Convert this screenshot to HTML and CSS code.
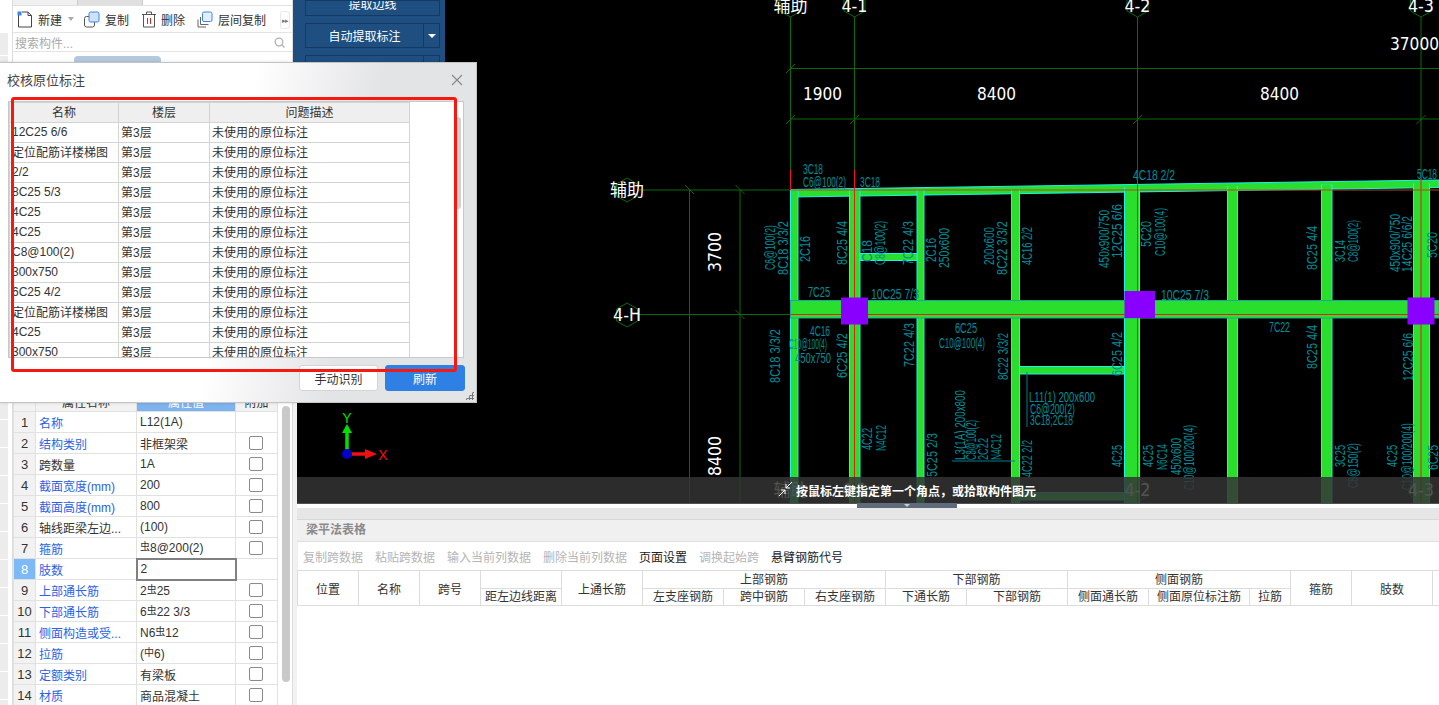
FILE: index.html
```html
<!DOCTYPE html>
<html lang="zh-CN">
<head>
<meta charset="utf-8">
<title>校核原位标注</title>
<link rel="stylesheet" href="styles.css">
</head>
<body>
<div class="app">
  <aside class="side">
    <div class="nav"></div>
    <div class="panel">
      <div class="tabs"><span class="tab"></span><span class="tab tab-on"></span></div>
      <div class="tools">
        <span class="tool tool-new">
          <svg class="ico" width="16" height="17" viewBox="0 0 16 17"><path d="M1.5 3.5v12.5h13V4.500l-3.500-3.500H5" fill="none" stroke="#444" stroke-width="1"/><path d="M11 1v3.500h3.500" fill="none" stroke="#444"/><rect x="0.500" y="0.500" width="4" height="4" fill="#3a86e8"/></svg>
          新建<span class="caret"></span>
        </span>
        <span class="tool">
          <svg class="ico" width="16" height="17" viewBox="0 0 16 17"><rect x="0.500" y="5.500" width="10" height="10.500" rx="2" fill="none" stroke="#555"/><rect x="5" y="1" width="10" height="10" rx="1.500" fill="#cfe0f8" stroke="#3a86e8"/></svg>
          复制
        </span>
        <span class="tool tool-del">
          <svg class="ico" width="14" height="17" viewBox="0 0 14 17"><path d="M1.500 4v12h11V4M0 3.500h14M4.500 3V1h5v2" fill="none" stroke="#555"/><path d="M5.500 7v6M8.500 7v6" stroke="#d62a20"/></svg>
          删除
        </span>
        <span class="tool">
          <svg class="ico" width="16" height="17" viewBox="0 0 16 17"><path d="M3.500 6v7.500h8M1 8.500V16h8" fill="none" stroke="#666"/><rect x="5.500" y="1" width="9.500" height="9.500" rx="1.500" fill="#e6effb" stroke="#3a86e8"/></svg>
          层间复制
        </span>
        <span class="more">▸▸</span>
      </div>
      <div class="search"><span>搜索构件...</span>
        <svg width="11" height="11" viewBox="0 0 11 11"><circle cx="5" cy="5" r="3.800" fill="none" stroke="#b0b0b0" stroke-width="1.300"/><path d="M8 8l2.500 2.500" stroke="#b0b0b0" stroke-width="1.300"/></svg>
      </div>
      <div class="subtab"></div>
      <div class="props-wrap">
        <table class="props">
          <colgroup><col class="c-i"><col class="c-n"><col class="c-v"><col class="c-a"></colgroup>
          <tr class="p-head"><th></th><th>属性名称</th><th class="p-sel">属性值</th><th>附加</th></tr>
          <tr><td class="i">1</td><td class="link">名称</td><td>L12(1A)</td><td></td></tr>
          <tr><td class="i">2</td><td class="link">结构类别</td><td>非框架梁</td><td class="k"><span class="box"></span></td></tr>
          <tr><td class="i">3</td><td>跨数量</td><td>1A</td><td class="k"><span class="box"></span></td></tr>
          <tr><td class="i">4</td><td class="link">截面宽度(mm)</td><td>200</td><td class="k"><span class="box"></span></td></tr>
          <tr><td class="i">5</td><td class="link">截面高度(mm)</td><td>800</td><td class="k"><span class="box"></span></td></tr>
          <tr><td class="i">6</td><td>轴线距梁左边...</td><td>(100)</td><td class="k"><span class="box"></span></td></tr>
          <tr><td class="i">7</td><td class="link">箍筋</td><td><span class="bar">虫</span>8@200(2)</td><td class="k"><span class="box"></span></td></tr>
          <tr><td class="i i-on">8</td><td class="link">肢数</td><td class="edit">2</td><td></td></tr>
          <tr><td class="i">9</td><td class="link">上部通长筋</td><td>2<span class="bar">虫</span>25</td><td class="k"><span class="box"></span></td></tr>
          <tr><td class="i">10</td><td class="link">下部通长筋</td><td>6<span class="bar">虫</span>22 3/3</td><td class="k"><span class="box"></span></td></tr>
          <tr><td class="i">11</td><td class="link">侧面构造或受...</td><td>N6<span class="bar">虫</span>12</td><td class="k"><span class="box"></span></td></tr>
          <tr><td class="i">12</td><td class="link">拉筋</td><td>(<span class="bar">中</span>6)</td><td class="k"><span class="box"></span></td></tr>
          <tr><td class="i">13</td><td class="link">定额类别</td><td>有梁板</td><td class="k"><span class="box"></span></td></tr>
          <tr><td class="i">14</td><td class="link">材质</td><td>商品混凝土</td><td class="k"><span class="box"></span></td></tr>
        </table>
        <div class="p-scroll"></div>
      </div>
    </div>
  </aside>

  <main class="main">
    <section class="canvas">
      <svg class="cad" width="1142" height="503" viewBox="297 0 1142 503">
        <g class="axis">
          <path d="M790.500 17V190M854.500 17V190M1137.500 17V190M1421 17V190"/>
          <path d="M790.500 68.500H1439M790.500 119H1439"/>
          <path d="M639 190H790M639 314.500H790"/>
          <path d="M689.500 190V503M740 190V503"/>
          <path d="M786 73l9-9M786 124l9-9M850 124l9-9M1133 124l9-9M1416.500 124l9-9M685 185l9 9M735.500 185l9 9M735.500 310l9 9"/>
          <polygon points="790.500,-7 801,-1 801,11 790.500,17 780,11 780,-1"/>
          <polygon points="854.500,-7 865,-1 865,11 854.500,17 844,11 844,-1"/>
          <polygon points="1137.500,-7 1148,-1 1148,11 1137.500,17 1127,11 1127,-1"/>
          <polygon points="1421,-7 1431.500,-1 1431.500,11 1421,17 1410.500,11 1410.500,-1"/>
          <polygon points="627,178 637.500,184 637.500,196 627,202 616.500,196 616.500,184"/>
          <polygon points="627,303 637.500,309 637.500,321 627,327 616.500,321 616.500,309"/>
          <polygon points="790.500,478 801,484 801,496 790.500,502 780,496 780,484"/>
          <polygon points="854.500,478 865,484 865,496 854.500,502 844,496 844,484"/>
          <polygon points="1137.500,478 1148,484 1148,496 1137.500,502 1127,496 1127,484"/>
          <polygon points="1421,478 1431.500,484 1431.500,496 1421,502 1410.500,496 1410.500,484"/>
        </g>
        <g class="beams">
          <polygon points="790.500,189.500 1439,180 1439,187.500 790.500,197"/>
          <rect x="790.500" y="190" width="7.500" height="313"/>
          <rect x="849.500" y="190" width="10.500" height="313"/>
          <rect x="917" y="190" width="7" height="313"/>
          <rect x="1011.500" y="190" width="8" height="313"/>
          <rect x="1124.500" y="188" width="15" height="315"/>
          <rect x="1227.500" y="187" width="10" height="316"/>
          <rect x="1321.500" y="185" width="10.500" height="318"/>
          <rect x="1413.500" y="184" width="16" height="319"/>
          <rect x="860" y="253.500" width="57" height="7"/>
          <rect x="1019.500" y="366.500" width="105" height="7.500"/>
          <rect x="1019.500" y="492.500" width="105" height="7.500"/>
          <rect class="main-beam" x="790.500" y="300.500" width="648.500" height="17.500"/>
        </g>
        <g class="fill">
          <rect x="791.500" y="301.500" width="6" height="16"/>
          <rect x="850.500" y="301.500" width="8.500" height="16"/>
          <rect x="918" y="301.500" width="5" height="16"/>
          <rect x="1012.500" y="301.500" width="6" height="16"/>
          <rect x="1125.500" y="301.500" width="13" height="16"/>
          <rect x="1228.500" y="301.500" width="8" height="16"/>
          <rect x="1322.500" y="301.500" width="8.500" height="16"/>
          <rect x="1414.500" y="301.500" width="14" height="16"/>
          <rect x="791.500" y="190.500" width="6" height="6"/>
          <rect x="850.500" y="190.500" width="8.500" height="6"/>
          <rect x="918" y="189.500" width="5" height="6"/>
          <rect x="1012.500" y="188.500" width="6" height="6"/>
          <rect x="1125.500" y="187" width="13" height="6"/>
          <rect x="1228.500" y="186" width="8" height="6"/>
          <rect x="1322.500" y="184.500" width="8.500" height="6"/>
          <rect x="1414.500" y="183" width="14" height="6"/>
        </g>
        <g class="reds">
          <path d="M790.500 170V190M854.500 170V503M1137.500 180V503M1421 178V503"/>
          <path d="M790.500 314.500H1439"/>
        </g>
        <path class="redline" d="M790.500 190H1439"/>
        <g class="cols">
          <rect x="841" y="297.500" width="27" height="27"/>
          <rect x="1124.500" y="291" width="30.500" height="27"/>
          <rect x="1407.500" y="297.500" width="27" height="27"/>
        </g>
        <path class="lead" d="M1027 372V427M952 461H1015"/>
        <g class="note">
          <text x="803" y="174" textLength="20" lengthAdjust="spacingAndGlyphs">3C18</text>
          <text x="803" y="187" textLength="43" lengthAdjust="spacingAndGlyphs">C6@100(2)</text>
          <text x="860" y="187" textLength="20" lengthAdjust="spacingAndGlyphs">3C18</text>
          <text x="1133" y="180" textLength="42" lengthAdjust="spacingAndGlyphs">4C18 2/2</text>
          <text x="1417" y="179" textLength="20" lengthAdjust="spacingAndGlyphs">5C18</text>
          <text x="808" y="297" textLength="22" lengthAdjust="spacingAndGlyphs">7C25</text>
          <text x="871" y="299" textLength="48" lengthAdjust="spacingAndGlyphs">10C25 7/3</text>
          <text x="810" y="336" textLength="20" lengthAdjust="spacingAndGlyphs">4C16</text>
          <text x="789" y="349" textLength="38" lengthAdjust="spacingAndGlyphs">C10@100(4)</text>
          <text x="795" y="363" textLength="36" lengthAdjust="spacingAndGlyphs">450x750</text>
          <text x="955" y="333" textLength="22" lengthAdjust="spacingAndGlyphs">6C25</text>
          <text x="939" y="348" textLength="46" lengthAdjust="spacingAndGlyphs">C10@100(4)</text>
          <text x="1161" y="300" textLength="48" lengthAdjust="spacingAndGlyphs">10C25 7/3</text>
          <text x="1269" y="332" textLength="21" lengthAdjust="spacingAndGlyphs">7C22</text>
          <text x="1029" y="402" textLength="66" lengthAdjust="spacingAndGlyphs">L11(1) 200x600</text>
          <text x="1030" y="414" textLength="45" lengthAdjust="spacingAndGlyphs">C6@200(2)</text>
          <text x="1030" y="425" textLength="43" lengthAdjust="spacingAndGlyphs">3C18;2C18</text>

          <text transform="translate(775,270) rotate(-90)" textLength="45" lengthAdjust="spacingAndGlyphs">C6@100(2)</text>
          <text transform="translate(788,275) rotate(-90)" textLength="54" lengthAdjust="spacingAndGlyphs">8C18 3/3/2</text>
          <text transform="translate(810,262) rotate(-90)" textLength="26" lengthAdjust="spacingAndGlyphs">2C16</text>
          <text transform="translate(847,265) rotate(-90)" textLength="44" lengthAdjust="spacingAndGlyphs">8C25 4/4</text>
          <text transform="translate(872,262) rotate(-90)" textLength="22" lengthAdjust="spacingAndGlyphs">C18</text>
          <text transform="translate(885,265) rotate(-90)" textLength="44" lengthAdjust="spacingAndGlyphs">C8@100(2)</text>
          <text transform="translate(913,265) rotate(-90)" textLength="44" lengthAdjust="spacingAndGlyphs">7C22 4/3</text>
          <text transform="translate(936,262) rotate(-90)" textLength="24" lengthAdjust="spacingAndGlyphs">2C16</text>
          <text transform="translate(949,268) rotate(-90)" textLength="40" lengthAdjust="spacingAndGlyphs">250x600</text>
          <text transform="translate(994,265) rotate(-90)" textLength="38" lengthAdjust="spacingAndGlyphs">200x600</text>
          <text transform="translate(1007,275) rotate(-90)" textLength="54" lengthAdjust="spacingAndGlyphs">8C22 3/3/2</text>
          <text transform="translate(1032,265) rotate(-90)" textLength="38" lengthAdjust="spacingAndGlyphs">4C16 2/2</text>
          <text transform="translate(1109,268) rotate(-90)" textLength="58" lengthAdjust="spacingAndGlyphs">450x900/750</text>
          <text transform="translate(1122,258) rotate(-90)" textLength="54" lengthAdjust="spacingAndGlyphs">12C25 6/6</text>
          <text transform="translate(1151,247) rotate(-90)" textLength="26" lengthAdjust="spacingAndGlyphs">5C20</text>
          <text transform="translate(1165,256) rotate(-90)" textLength="48" lengthAdjust="spacingAndGlyphs">C10@100(4)</text>
          <text transform="translate(1317,270) rotate(-90)" textLength="44" lengthAdjust="spacingAndGlyphs">8C25 4/4</text>
          <text transform="translate(1345,262) rotate(-90)" textLength="22" lengthAdjust="spacingAndGlyphs">3C14</text>
          <text transform="translate(1358,262) rotate(-90)" textLength="42" lengthAdjust="spacingAndGlyphs">C8@100(2)</text>
          <text transform="translate(1400,272) rotate(-90)" textLength="58" lengthAdjust="spacingAndGlyphs">450x900/750</text>
          <text transform="translate(1412,272) rotate(-90)" textLength="56" lengthAdjust="spacingAndGlyphs">14C25 6/6/2</text>
          <text transform="translate(1437,258) rotate(-90)" textLength="26" lengthAdjust="spacingAndGlyphs">5C20</text>

          <text transform="translate(780,383) rotate(-90)" textLength="54" lengthAdjust="spacingAndGlyphs">8C18 3/3/2</text>
          <text transform="translate(847,378) rotate(-90)" textLength="45" lengthAdjust="spacingAndGlyphs">6C25 4/2</text>
          <text transform="translate(914,367) rotate(-90)" textLength="44" lengthAdjust="spacingAndGlyphs">7C22 4/3</text>
          <text transform="translate(1008,380) rotate(-90)" textLength="47" lengthAdjust="spacingAndGlyphs">8C22 3/3/2</text>
          <text transform="translate(872,450) rotate(-90)" textLength="22" lengthAdjust="spacingAndGlyphs">4C22</text>
          <text transform="translate(886,451) rotate(-90)" textLength="26" lengthAdjust="spacingAndGlyphs">N4C12</text>
          <text transform="translate(937,477) rotate(-90)" textLength="44" lengthAdjust="spacingAndGlyphs">5C25 2/3</text>
          <text transform="translate(965,460) rotate(-90)" textLength="70" lengthAdjust="spacingAndGlyphs">L3(1A) 200x800</text>
          <text transform="translate(976,460) rotate(-90)" textLength="40" lengthAdjust="spacingAndGlyphs">C8@100(2)</text>
          <text transform="translate(988,460) rotate(-90)" textLength="22" lengthAdjust="spacingAndGlyphs">2C22</text>
          <text transform="translate(1001,460) rotate(-90)" textLength="26" lengthAdjust="spacingAndGlyphs">N4C12</text>
          <text transform="translate(1122,376) rotate(-90)" textLength="44" lengthAdjust="spacingAndGlyphs">6C25 4/2</text>
          <text transform="translate(1032,477) rotate(-90)" textLength="37" lengthAdjust="spacingAndGlyphs">4C22 2/2</text>
          <text transform="translate(1122,467) rotate(-90)" textLength="22" lengthAdjust="spacingAndGlyphs">4C25</text>
          <text transform="translate(1153,467) rotate(-90)" textLength="22" lengthAdjust="spacingAndGlyphs">4C25</text>
          <text transform="translate(1167,470) rotate(-90)" textLength="26" lengthAdjust="spacingAndGlyphs">N6C14</text>
          <text transform="translate(1181,475) rotate(-90)" textLength="37" lengthAdjust="spacingAndGlyphs">450x600</text>
          <text transform="translate(1194,490) rotate(-90)" textLength="65" lengthAdjust="spacingAndGlyphs">C10@100/200(4)</text>
          <text transform="translate(1317,369) rotate(-90)" textLength="44" lengthAdjust="spacingAndGlyphs">8C25 4/4</text>
          <text transform="translate(1345,467) rotate(-90)" textLength="22" lengthAdjust="spacingAndGlyphs">3C25</text>
          <text transform="translate(1358,488) rotate(-90)" textLength="45" lengthAdjust="spacingAndGlyphs">C8@150(2)</text>
          <text transform="translate(1397,467) rotate(-90)" textLength="22" lengthAdjust="spacingAndGlyphs">4C25</text>
          <text transform="translate(1412,490) rotate(-90)" textLength="67" lengthAdjust="spacingAndGlyphs">C10@100/200(4)</text>
          <text transform="translate(1413,381) rotate(-90)" textLength="48" lengthAdjust="spacingAndGlyphs">12C25 6/6</text>
          <text transform="translate(1438,470) rotate(-90)" textLength="25" lengthAdjust="spacingAndGlyphs">6C25</text>
        </g>
        <g class="big">
          <text x="790.500" y="12" text-anchor="middle">辅助</text>
          <text x="854.500" y="12" text-anchor="middle" textLength="26" lengthAdjust="spacingAndGlyphs">4-1</text>
          <text x="1137.500" y="12" text-anchor="middle" textLength="26" lengthAdjust="spacingAndGlyphs">4-2</text>
          <text x="1421" y="12" text-anchor="middle" textLength="26" lengthAdjust="spacingAndGlyphs">4-3</text>
          <text x="1390" y="50" textLength="49" lengthAdjust="spacingAndGlyphs">37000</text>
          <text x="803" y="100" textLength="39" lengthAdjust="spacingAndGlyphs">1900</text>
          <text x="977" y="100" textLength="39" lengthAdjust="spacingAndGlyphs">8400</text>
          <text x="1260" y="100" textLength="39" lengthAdjust="spacingAndGlyphs">8400</text>
          <text x="627" y="196" text-anchor="middle">辅助</text>
          <text x="627" y="321" text-anchor="middle" textLength="28" lengthAdjust="spacingAndGlyphs">4-H</text>
          <text transform="translate(721,272) rotate(-90)" textLength="40" lengthAdjust="spacingAndGlyphs">3700</text>
          <text transform="translate(721,476) rotate(-90)" textLength="40" lengthAdjust="spacingAndGlyphs">8400</text>
          <text x="790.500" y="496" text-anchor="middle">辅助</text>
          <text x="854.500" y="496" text-anchor="middle" textLength="26" lengthAdjust="spacingAndGlyphs">4-1</text>
          <text x="1137.500" y="496" text-anchor="middle" textLength="26" lengthAdjust="spacingAndGlyphs">4-2</text>
          <text x="1421" y="496" text-anchor="middle" textLength="26" lengthAdjust="spacingAndGlyphs">4-3</text>
        </g>
        <g class="ucs">
          <path d="M347 454V430" stroke="#00e000" stroke-width="3.500"/>
          <path d="M347 424l-5 9h10z" fill="#00e000"/>
          <path d="M347 454H368" stroke="#f01010" stroke-width="3.500"/>
          <path d="M377 454l-12-5v10z" fill="#f01010"/>
          <circle cx="347" cy="454" r="5" fill="#0000c8"/>
          <text class="ucs-y" x="347" y="423" text-anchor="middle">Y</text>
          <text class="ucs-x" x="383" y="460" text-anchor="middle">X</text>
        </g>
      </svg>

      <div class="blue">
        <div class="bbtn bbtn-cut"><span>提取边线</span></div>
        <div class="bbtn bbtn-split"><span class="bb-main">自动提取标注</span><span class="bb-drop"></span></div>
        <div class="bbtn bbtn-split"><span class="bb-main"></span><span class="bb-drop"></span></div>
      </div>

      <div class="status">
        <svg class="cursor" width="16" height="16" viewBox="0 0 16 16"><path d="M14 1L8 7M8 3v4h4M1 15L7 9M3 9h4v4" fill="none" stroke="#fff"/></svg>
        <span>按鼠标左键指定第一个角点&#xFF0C;或拾取构件图元</span>
      </div>
      <div class="handle"><span></span></div>
    </section>

    <section class="lower">
      <div class="l-strip"></div>
      <div class="l-title">梁平法表格</div>
      <div class="l-tools">
        <span class="off">复制跨数据</span><span class="off">粘贴跨数据</span><span class="off">输入当前列数据</span><span class="off">删除当前列数据</span><span>页面设置</span><span class="off">调换起始跨</span><span>悬臂钢筋代号</span>
      </div>
      <table class="grid">
        <colgroup>
          <col class="w61"><col class="w61"><col class="w61"><col class="w81"><col class="w81"><col class="w81"><col class="w81"><col class="w81"><col class="w81"><col class="w101"><col class="w81"><col class="w101"><col class="w41"><col class="w61"><col class="w81"><col class="w7">
        </colgroup>
        <tr>
          <th rowspan="2" class="span">位置</th><th rowspan="2" class="span">名称</th><th rowspan="2" class="span">跨号</th><th></th><th rowspan="2" class="span">上通长筋</th>
          <th colspan="3">上部钢筋</th><th colspan="2">下部钢筋</th><th colspan="3">侧面钢筋</th>
          <th rowspan="2" class="span">箍筋</th><th rowspan="2" class="span">肢数</th><th rowspan="2"></th>
        </tr>
        <tr class="grid-sub">
          <th>距左边线距离</th><th>左支座钢筋</th><th>跨中钢筋</th><th>右支座钢筋</th><th>下通长筋</th><th>下部钢筋</th><th>侧面通长筋</th><th>侧面原位标注筋</th><th>拉筋</th>
        </tr>
      </table>
    </section>
  </main>

  <div class="dialog">
    <div class="d-title"><span>校核原位标注</span>
      <svg width="12" height="12" viewBox="0 0 12 12"><path d="M1 1l10 10M11 1L1 11" stroke="#8a8a8a" stroke-width="1.200"/></svg>
    </div>
    <div class="d-box">
      <table class="d-table">
        <colgroup><col class="d1"><col class="d2"><col class="d3"></colgroup>
        <tr><th>名称</th><th>楼层</th><th>问题描述</th></tr>
        <tr><td>12C25 6/6</td><td>第3层</td><td>未使用的原位标注</td></tr>
        <tr><td>定位配筋详楼梯图</td><td>第3层</td><td>未使用的原位标注</td></tr>
        <tr><td>2/2</td><td>第3层</td><td>未使用的原位标注</td></tr>
        <tr><td>8C25 5/3</td><td>第3层</td><td>未使用的原位标注</td></tr>
        <tr><td>4C25</td><td>第3层</td><td>未使用的原位标注</td></tr>
        <tr><td>4C25</td><td>第3层</td><td>未使用的原位标注</td></tr>
        <tr><td>C8@100(2)</td><td>第3层</td><td>未使用的原位标注</td></tr>
        <tr><td>300x750</td><td>第3层</td><td>未使用的原位标注</td></tr>
        <tr><td>6C25 4/2</td><td>第3层</td><td>未使用的原位标注</td></tr>
        <tr><td>定位配筋详楼梯图</td><td>第3层</td><td>未使用的原位标注</td></tr>
        <tr><td>4C25</td><td>第3层</td><td>未使用的原位标注</td></tr>
        <tr><td>300x750</td><td>第3层</td><td>未使用的原位标注</td></tr>
      </table>
      <div class="d-scroll"></div>
    </div>
    <div class="d-foot">
      <button class="btn">手动识别</button>
      <button class="btn btn-main">刷新</button>
    </div>
    <div class="grip"></div>
    <div class="redbox"></div>
  </div>
</div>
</body>
</html>
```

FILE: styles.css
```css
* { box-sizing: border-box; }
html, body { margin: 0; height: 100%; overflow: hidden; }
body { font-family: "Liberation Sans", "Noto Sans CJK SC", sans-serif; font-size: 12px; color: #333; background: #fff; }
.app { position: relative; display: flex; width: 1439px; height: 705px; overflow: hidden; }

/* left side */
.side { display: flex; width: 297px; height: 705px; background: #f2f2f2; flex: none; }
.nav { width: 13px; flex: none; background: linear-gradient(#fff, #fff) 0 0 / 100% 33px no-repeat, repeating-linear-gradient(to bottom, #ececec 0, #ececec 27px, #fff 27px, #fff 28px) 0 0 / 8px 100% no-repeat, #fff; border-right: 1px solid #ddd; }
.panel { width: 280px; flex: none; background: #fff; border-right: 1px solid #ddd; display: flex; flex-direction: column; overflow: hidden; }
.panel > * { flex: none; }
.tabs { display: flex; height: 6px; border-bottom: 1px solid #e0e0e0; }
.tab { width: 65px; background: #f0f0f0; border-right: 1px solid #ccc; }
.tab-on { background: #e0e0e0; }
.tools { display: flex; align-items: center; height: 27px; padding: 0 0 0 4px; gap: 13px; border-bottom: 1px solid #e4e4e4; font-size: 12px; color: #333; position: relative; }
.tool { display: flex; align-items: center; gap: 5px; white-space: nowrap; }
.tool-new { margin-right: -3px; }
.tool-del { margin-right: -1px; }
.caret { margin-left: 1px; border: 3.500px solid transparent; border-top: 4px solid #aaa; border-bottom: 0; width: 0; height: 0; }
.more { position: absolute; left: 267px; top: 5px; width: 10px; height: 18px; font-size: 7px; line-height: 18px; letter-spacing: -1px; color: #777; border: 1px solid #e8e8e8; border-radius: 3px; text-align: center; overflow: hidden; }
.search { display: flex; justify-content: space-between; align-items: center; height: 19px; padding: 0 7px 0 2px; color: #aaa; border-bottom: 1px solid #e4e4e4; font-size: 12px; }
.subtab { width: 87px; height: 6px; margin: 4px 0 0 61px; background: #b4c8e0; border-radius: 4px 4px 0 0; }
.props-wrap { margin-top: 328px; display: flex; align-items: flex-start; }
.props { border-collapse: collapse; table-layout: fixed; width: 264px; font-size: 12px; color: #333; }
.c-i { width: 22px; } .c-n { width: 101px; } .c-v { width: 99px; } .c-a { width: 42px; }
.props td, .props th { height: 21px; padding: 0 3px; border: 1px solid #e1e1e1; white-space: nowrap; overflow: hidden; font-weight: 400; }
.p-head th { background: #f2f2f2; text-align: center; }
.props .p-sel { background: #7db3ef; color: #fff; }
.props .i { background: #f2f2f2; text-align: center; padding: 0; font-size: 13px; }
.props .i-on { background: #7db8f7; color: #fff; }
.props .link { color: #2b62e3; }
.props .edit { border: 2px solid #808080; }
.props .k { text-align: center; line-height: 0; }
.box { display: inline-block; width: 14px; height: 14px; margin-left: -2px; border: 1px solid #8a8a8a; border-radius: 2px; background: #fff; }
.bar { font-size: 10px; position: relative; top: -2px; }
.p-scroll { width: 8px; height: 276px; margin: 16px 0 0 4px; background: #c9c9c9; border-radius: 4px; flex: none; }

/* main */
.main { flex: 1; min-width: 0; display: flex; flex-direction: column; }
.canvas { position: relative; height: 503px; background: #000; flex: none; }
.cad { display: block; font-family: "Liberation Sans", sans-serif; }
.axis path, .axis polygon { fill: none; stroke: #0c6a0c; stroke-width: 1; }
.beams > * { fill: #2ade2e; stroke: #19f2f2; stroke-width: 1; }
.beams > .main-beam { stroke: #14a8a0; }
.fill rect { fill: #2ade2e; }
.reds path { fill: none; stroke: #f01818; stroke-width: 1; }
.redline { fill: none; stroke: #b04a18; stroke-width: 1; }
.cols rect { fill: #8a00ff; }
.lead { fill: none; stroke: #007f8f; stroke-width: 1; }
.note text { fill: #008f99; font-size: 14px; }
.big text { fill: #fff; font-size: 17px; font-family: "DejaVu Sans", "Noto Sans CJK SC", sans-serif; }
.ucs-y { fill: #00e000; font-size: 14px; }
.ucs-x { fill: #f01010; font-size: 14px; }

.blue { position: absolute; left: -4px; top: 0; width: 152px; height: 403px; background: #1e4f80; padding: 0 5px 0 12px; display: flex; flex-direction: column; gap: 7px; }
.bbtn { height: 25px; border: 1px solid #123a63; color: #fff; font-size: 12px; display: flex; align-items: center; justify-content: center; flex: none; }
.bbtn-cut { height: 16px; align-items: flex-end; overflow: hidden; }
.bbtn-cut span { display: block; line-height: 16px; margin-bottom: 2px; }
.bbtn-split { justify-content: flex-start; }
.bb-main { flex: 1; text-align: center; line-height: 23px; padding-top: 3px; }
.bb-drop { width: 16px; height: 100%; border-left: 1px solid #123a63; position: relative; }
.bb-drop::after { content: ""; position: absolute; left: 4px; top: 10px; border: 4px solid transparent; border-top: 4px solid #fff; border-bottom: 0; }

.status { position: absolute; left: 0; right: 0; top: 477px; height: 27px; background: rgba(52, 52, 52, 0.85); color: #fff; font-size: 12px; font-weight: 700; display: flex; align-items: center; padding-left: 481px; gap: 2px; }
.cursor { margin-top: -4px; }
.handle { position: absolute; left: 560px; top: 503px; width: 100px; height: 5px; background: #5f6b7a; }
.handle span { display: block; width: 0; margin: 1px auto 0; border: 3px solid transparent; border-top: 3px solid #c8ccd2; border-bottom: 0; }

/* lower panel */
.lower { flex: 1; background: #fff; padding-top: 5px; min-height: 0; overflow: hidden; }
.l-strip { height: 12px; background: #e6e6e6; border-bottom: 1px solid #d8d8d8; }
.l-title { height: 22px; line-height: 21px; padding-left: 9px; background: #f0f0f0; border-bottom: 1px solid #dedede; font-weight: 700; color: #8a8a8a; font-size: 12px; }
.l-tools { display: flex; gap: 12px; height: 28px; align-items: center; padding-left: 5px; color: #222; border-left: 1px solid #eee; }
.l-tools .off { color: #b5b5b5; }
.grid { border-collapse: collapse; table-layout: fixed; width: 1142px; color: #333; font-size: 12px; }
.w61 { width: 61px; } .w81 { width: 81px; } .w101 { width: 101px; } .w41 { width: 41px; } .w7 { width: 7px; }
.grid th { height: 17px; padding: 2px 0 0; border: 1px solid #dcdcdc; font-weight: 400; text-align: center; white-space: nowrap; overflow: hidden; line-height: 15px; }
.grid .span { padding-top: 4px; }
.grid-sub th { padding-top: 1px; }

/* dialog */
.dialog { position: absolute; left: 0; top: 62px; width: 477px; height: 341px; background: linear-gradient(100deg, #fff 48%, #e3e4e6 72%); border: 1px solid #c4c4c4; border-left: 0; display: flex; flex-direction: column; padding: 0 11px 0 8px; box-shadow: 0 0 3px rgba(0,0,0,.15); }
.d-title { display: flex; justify-content: space-between; align-items: center; height: 38px; padding-bottom: 5px; font-size: 13px; color: #444; padding-right: 2px; margin-left: -1px; }
.d-box { position: relative; height: 257px; width: 456px; background: #fff; border: 1px solid #c8c8c8; overflow: hidden; }
.d-table { border-collapse: collapse; table-layout: fixed; width: 400px; font-size: 12px; color: #333; }
.d1 { width: 109px; } .d2 { width: 91px; } .d3 { width: 200px; }
.d-table th, .d-table td { height: 20px; padding: 0 2px 2px; border: 1px solid #d4d4d4; font-weight: 400; white-space: nowrap; overflow: hidden; }
.d-table th { background: #efefef; text-align: center; }
.d-scroll { position: absolute; left: 446px; top: 15px; width: 6px; height: 92px; background: #d0d0d0; border-radius: 3px; }
.d-foot { display: flex; justify-content: flex-end; gap: 7px; margin-top: 7px; }
.btn { width: 79px; height: 26px; font: inherit; font-size: 12px; color: #333; background: #fff; border: 1px solid #d4d4d4; border-radius: 3px; padding: 0; }
.btn-main { width: 80px; background: #2f80e4; border-color: #2f80e4; color: #fff; }
.grip { position: absolute; right: 2px; bottom: 2px; width: 9px; height: 9px; background: radial-gradient(circle, #777 0 1px, transparent 1.100px) 0 0 / 3px 3px; clip-path: polygon(100% 0, 100% 100%, 0 100%); }
.redbox { position: absolute; left: 11px; top: 34px; width: 446px; height: 275px; border: 3px solid #f7190f; border-radius: 3px; }
```
